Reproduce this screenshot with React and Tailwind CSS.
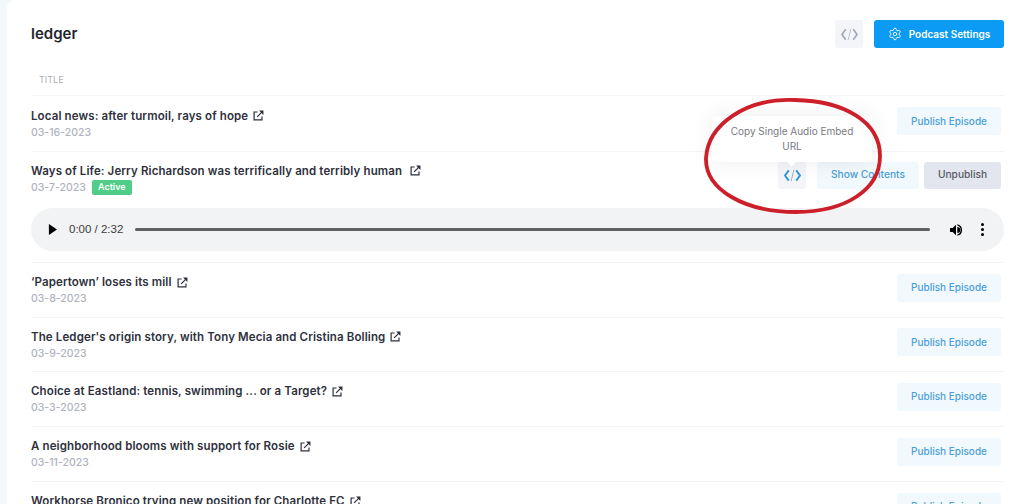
import { Settings } from "lucide-react";

const FONT = "font-['Inter','Noto_Sans',sans-serif]";

const episodes = [
  { title: "‘Papertown’ loses its mill", date: "03-8-2023", h: "h-[55px]" },
  { title: "The Ledger's origin story, with Tony Mecia and Cristina Bolling", date: "03-9-2023", h: "h-[54px]" },
  { title: "Choice at Eastland: tennis, swimming ... or a Target?", date: "03-3-2023", h: "h-[55px]" },
  { title: "A neighborhood blooms with support for Rosie", date: "03-11-2023", h: "h-[55px]" },
  { title: "Workhorse Bronico trying new position for Charlotte FC", date: "03-5-2023", h: "h-[55px]" },
];

const LinkIcon = () => (
  <svg viewBox="0 0 12 12" className="w-[11px] h-[11px] shrink-0" fill="none" stroke="#2b2e3a" strokeWidth="1.3">
    <path d="M5 2.2H1.2v8.6h8.6V7" />
    <path d="M4.5 7.5 10 2" />
    <path d="M6.6.6h4.8v4.8z" fill="#2b2e3a" stroke="none" />
  </svg>
);

const CodeIcon = ({ color, slash, width = 2 }) => (
  <svg viewBox="0 0 20 16" className="w-[19px] h-[15px]" fill="none" stroke={color} strokeWidth={width}>
    <path d="M6 2.5 2 8l4 5.500" />
    <path d="M14 2.500 18 8l-4 5.500" />
    <path d="M11.500 2 8.500 14" stroke={slash} strokeWidth="0.9" />
  </svg>
);

const Title = ({ text, gap = "gap-[5px]" }) => (
  <div className={`flex items-center ${gap}`}>
    <span className="text-[11.5px] leading-[16px] font-semibold text-[#2e313d] tracking-[0.12px] whitespace-nowrap">{text}</span>
    <LinkIcon />
  </div>
);

const PublishBtn = () => (
  <button className="mb-[5px] w-[104px] h-[28px] rounded-[3px] bg-[#f1f9fe] text-[#4a9fd8] text-[10px] font-medium">
    Publish Episode
  </button>
);

const Row = ({ title, date, h }) => (
  <div className={`${h} flex items-center justify-between pr-[3px] border-b border-[#f3f4f6]`}>
    <div className="flex flex-col gap-[1px]">
      <Title text={title} />
      <span className="text-[10.5px] leading-[15px] font-medium text-[#b0b3bf]">{date}</span>
    </div>
    <PublishBtn />
  </div>
);

const AudioBar = () => (
  <div className="h-[43px] rounded-full bg-[#f1f3f4] flex items-center pl-[17px] pr-[17px]">
    <svg viewBox="0 0 10 12" className="w-[9px] h-[11px] shrink-0">
      <path d="M1 0l9 6-9 6z" fill="#000" />
    </svg>
    <span className="ml-[12px] font-['Liberation_Sans',sans-serif] text-[11.5px] text-[#3c3c3c] whitespace-nowrap">0:00 / 2:32</span>
    <div className="ml-[12px] w-[795px] h-[3px] rounded-full bg-[#5f5f5f]" />
    <svg viewBox="0 0 24 24" className="ml-[18px] w-[16px] h-[16px] shrink-0" fill="#000">
      <path d="M3 9v6h4l5 5V4L7 9z" />
      <path d="M14 7.500v9a4.500 4.500 0 0 0 0-9z" />
      <path d="M14 3.200v2.100a7 7 0 0 1 0 13.400v2.100a9 9 0 0 0 0-17.600z" />
    </svg>
    <div className="ml-[17px] flex flex-col gap-[2px]">
      <span className="w-[3px] h-[3px] rounded-full bg-black" />
      <span className="w-[3px] h-[3px] rounded-full bg-black" />
      <span className="w-[3px] h-[3px] rounded-full bg-black" />
    </div>
  </div>
);

export default function App() {
  return (
    <div className={`relative w-[1024px] h-[504px] overflow-hidden bg-[#f3f8fb] pl-[7px] ${FONT}`}>
      <div className="h-[560px] bg-white rounded-tl-lg pl-[24px] pr-[20px]">
        {/* Header */}
        <div className="h-[68px] pt-[20px] flex items-start justify-between">
          <h1 className="mt-[3px] text-[15px] leading-[22px] font-semibold text-[#23262f]">ledger</h1>
          <div className="flex items-center gap-[11px]">
            <div className="w-[28px] h-[28px] rounded-[3px] bg-[#f3f5f9] flex items-center justify-center">
              <CodeIcon color="#a3a8b5" slash="#b5b9c4" width={1.8} />
            </div>
            <button className="w-[130px] h-[28px] rounded-[3px] bg-[#0b9bf5] text-white text-[10px] font-semibold flex items-center justify-center gap-[7px]">
              <Settings size={14} strokeWidth={1.5} />
              Podcast Settings
            </button>
          </div>
        </div>

        <div className="h-[28px] pl-[8px] pb-[4px] flex items-center border-b border-[#f3f4f6]">
          <span className="text-[9px] text-[#adafb6]">TITLE</span>
        </div>

        {/* First episode */}
        <Row title="Local news: after turmoil, rays of hope" date="03-16-2023" h="h-[56px]" />

        {/* Active episode */}
        <div className="h-[111px] border-b border-[#f3f4f6]">
          <div className="h-[56px] flex items-center justify-between pr-[3px]">
            <div className="mb-[3px] flex flex-col gap-[1px]">
              <Title text="Ways of Life: Jerry Richardson was terrifically and terribly human" gap="gap-[8px]" />
              <div className="flex items-center gap-[6px]">
                <span className="text-[10.5px] leading-[15px] font-medium text-[#b0b3bf]">03-7-2023</span>
                <span className="h-[15px] w-[40px] rounded-[2px] bg-[#50cd89] text-white text-[9px] font-semibold flex items-center justify-center">Active</span>
              </div>
            </div>
            <div className="mb-[10px] flex items-center gap-[11px]">
              <div className="w-[28px] h-[27px] rounded-[3px] bg-[#f3f5f9] flex items-center justify-center">
                <CodeIcon color="#2f97d8" slash="#9aa3b0" />
              </div>
              <button className="w-[102px] h-[27px] rounded-[3px] bg-[#f1f9fe] text-[#4a9fd8] text-[10.2px] font-medium">Show Contents</button>
              <button className="-ml-[6px] w-[77px] h-[27px] rounded-[3px] bg-[#e4e6ef] text-[#555a68] text-[10.2px] font-medium">Unpublish</button>
            </div>
          </div>
          <AudioBar />
        </div>

        {episodes.map((ep) => (
          <Row key={ep.title} {...ep} />
        ))}
      </div>

      {/* Tooltip */}
      <div className="absolute left-[712px] top-[116px] w-[160px] h-[46px] bg-white rounded-[3px] shadow-[0_0_20px_rgba(80,80,100,0.1)] flex items-center justify-center text-center text-[10px] leading-[15px] text-[#777a82]">
        Copy Single Audio Embed
        <br />
        URL
        <span className="absolute left-[76px] -bottom-[3px] w-[7px] h-[7px] rotate-45 bg-white" />
      </div>

      {/* Red annotation */}
      <svg className="absolute inset-0 pointer-events-none" width="1024" height="504" fill="none">
        <path
          d="M795 100C745 98 708 125 706 158C705 190 745 212 796 212C845 212 880 190 880 156C880 122 845 101 795 100Z"
          stroke="#cc1f2a"
          strokeWidth="3.8"
        />
      </svg>
    </div>
  );
}
